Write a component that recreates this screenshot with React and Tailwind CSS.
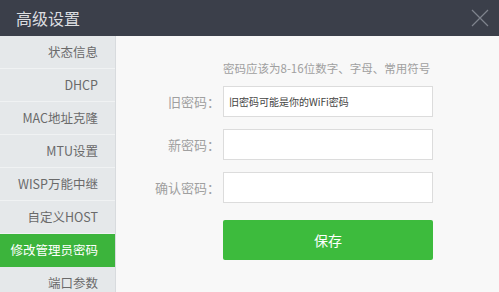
import React from 'react';

const menu = ['状态信息', 'DHCP', 'MAC地址克隆', 'MTU设置', 'WISP万能中继', '自定义HOST', '修改管理员密码', '端口参数'];

const fields = [
  { label: '旧密码：', value: '旧密码可能是你的WiFi密码' },
  { label: '新密码：', value: '' },
  { label: '确认密码：', value: '' },
];

export default function App() {
  return (
    <div
      className="w-[499px] h-[292px] overflow-hidden flex flex-col bg-[#f8f8f8]"
      style={{ fontFamily: '"Noto Sans CJK SC", "Noto Sans", sans-serif' }}
    >
      {/* header */}
      <div className="h-[36px] shrink-0 bg-[#3b3f4a] flex items-center justify-between pl-[16px] pr-[10px]">
        <span className="text-[16px] text-[#dcdde0] leading-none">高级设置</span>
        <svg width="18" height="18" viewBox="0 0 18 18" className="text-[#7f838d]">
          <path d="M1 1L17 17M17 1L1 17" stroke="currentColor" strokeWidth="1.2" />
        </svg>
      </div>

      <div className="flex flex-1 min-h-0">
        {/* sidebar */}
        <div className="w-[116px] shrink-0 bg-[#e5e8ea] border-r border-[#d8dbde] flex flex-col">
          {menu.map((item) => {
            const active = item === '修改管理员密码';
            return (
              <div
                key={item}
                className={`h-[33px] shrink-0 flex items-center justify-end pr-[17px] text-[12.5px] border-b ${
                  active ? 'bg-[#3cb43c] text-white border-[#3cb43c]' : 'text-[#6a6a6a] border-[#f0f2f3]'
                }`}
              >
                {item}
              </div>
            );
          })}
        </div>

        {/* content */}
        <div className="flex-1 pl-[26px] pt-[25px]">
          <div className="pl-[81px] text-[11.5px] text-[#a0a0a0] h-[14px] leading-[14px] whitespace-nowrap">
            密码应该为8-16位数字、字母、常用符号
          </div>
          <div className="mt-[11px] flex flex-col gap-[12px]">
            {fields.map((f) => (
              <div key={f.label} className="flex items-center">
                <span className="w-[78px] shrink-0 mr-[3px] text-right text-[13px] text-[#a0a0a0] whitespace-nowrap">
                  {f.label}
                </span>
                <div className="w-[210px] h-[31px] bg-white border border-[#dcdcdc] flex items-center px-[5px] text-[10px] text-[#444] whitespace-nowrap">
                  {f.value}
                </div>
              </div>
            ))}
          </div>
          <div className="pl-[81px] mt-[17px]">
            <button className="w-[210px] h-[40px] rounded-[2px] bg-[#3dbb3d] text-white text-[14px]">保存</button>
          </div>
        </div>
      </div>
    </div>
  );
}
